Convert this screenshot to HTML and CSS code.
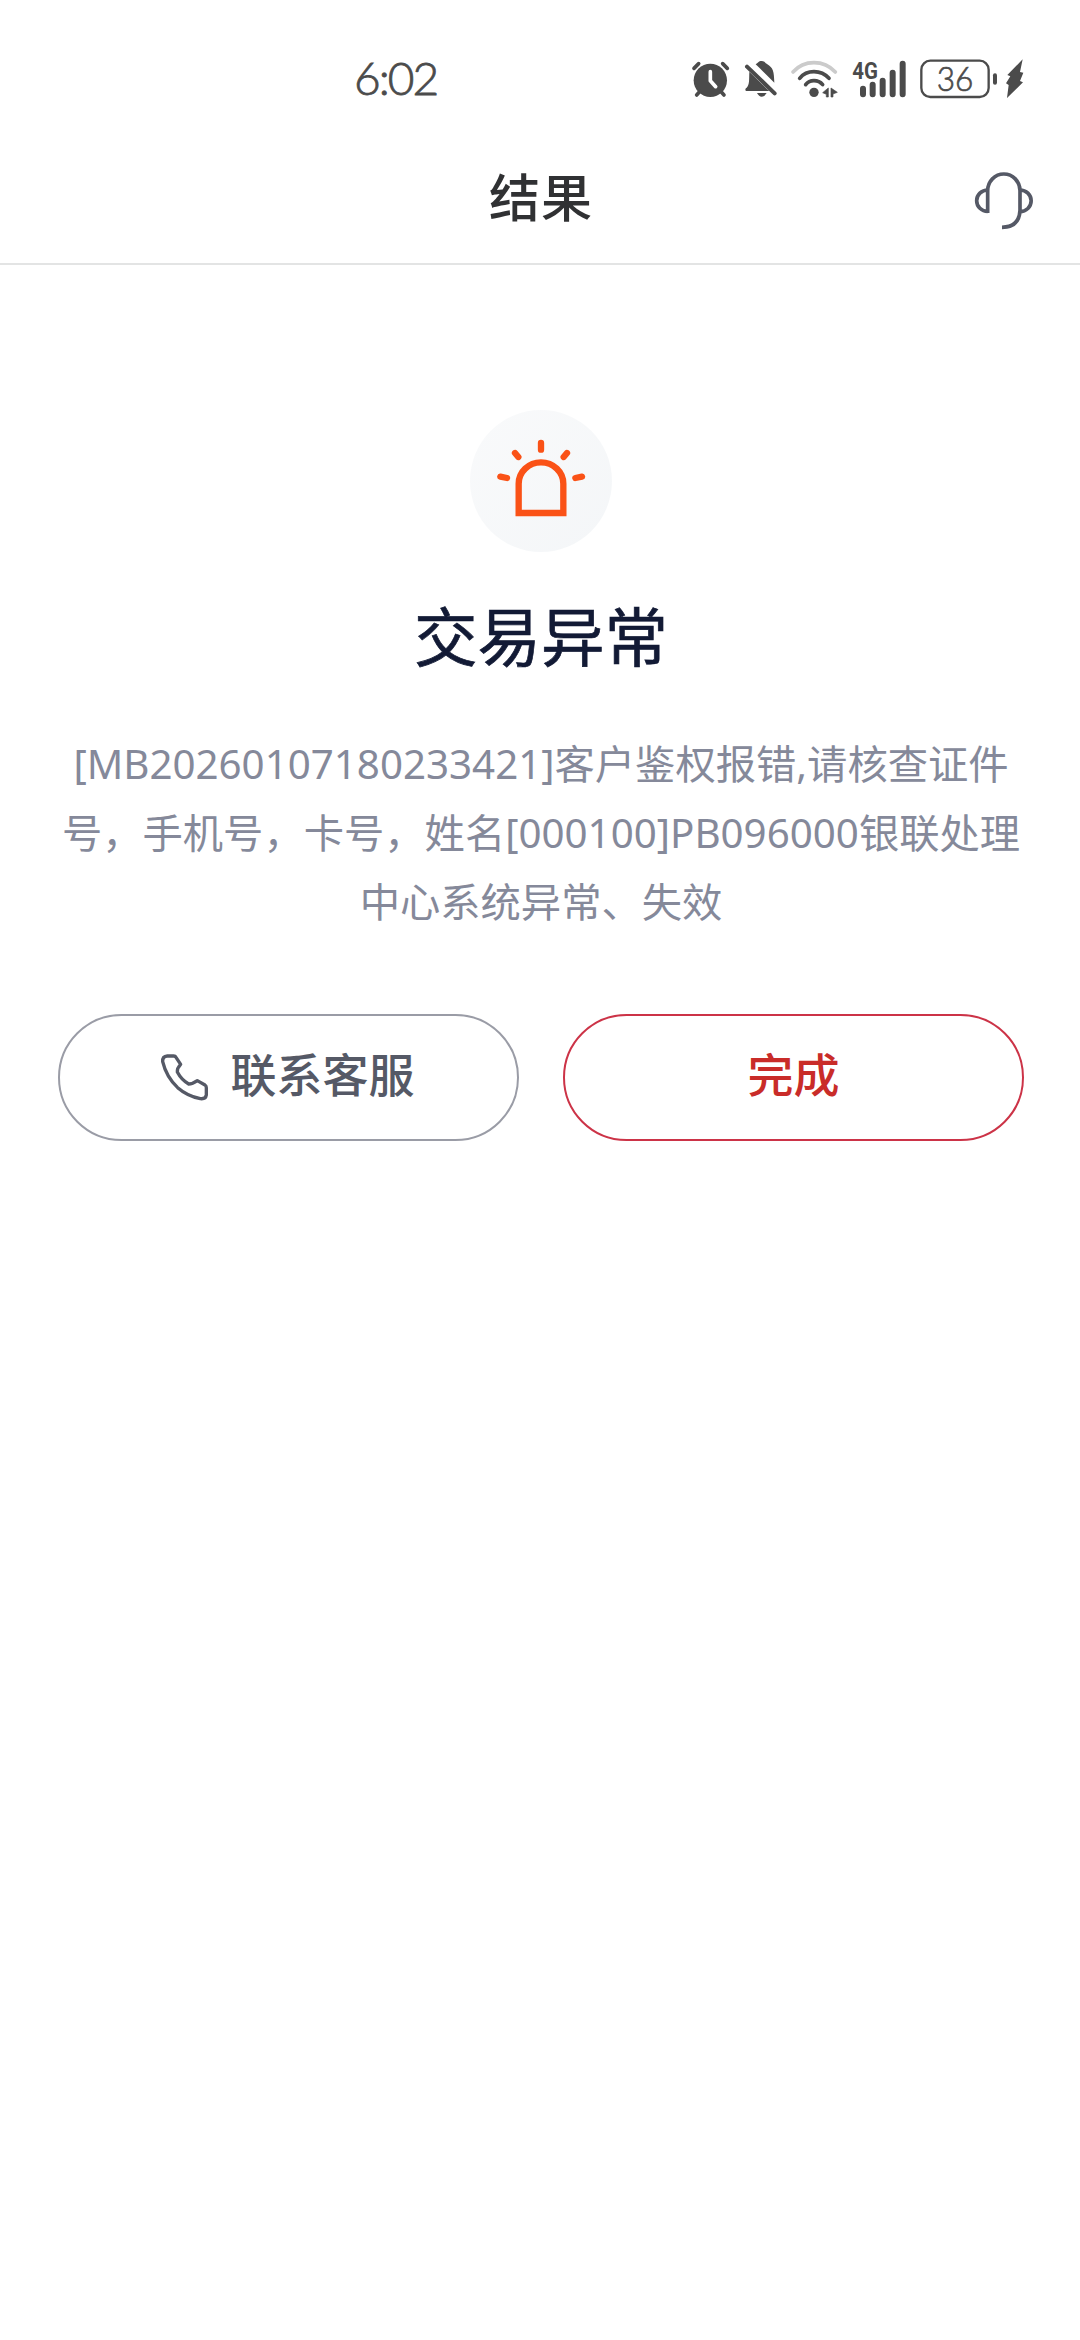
FILE: index.html
```html
<!DOCTYPE html>
<html lang="zh-CN">
<head>
<meta charset="utf-8">
<title>结果</title>
<link rel="stylesheet" href="styles.css">
</head>
<body>
<div class="status-bar">
  <span class="time">6:02</span>
  <div class="status-icons">
    <svg class="alarm" viewBox="0 0 170 195">
      <circle cx="91" cy="103" r="50" fill="#4b4b4b"/>
      <path d="M42 67 56 53M128 53 142 67M60 136 50 147M122 136 132 147" stroke="#4b4b4b" stroke-width="11" stroke-linecap="round"/>
      <path d="M91 77V104L107 122" fill="none" stroke="#fff" stroke-width="11" stroke-linecap="round" stroke-linejoin="round"/>
    </svg>
    <svg class="bell" viewBox="170 0 140 195">
      <path d="M207 77 260 129 267 135H198C193 135 195 126 199 125 208 114 206 105 207 77ZM226 55C233 51 234 45 244 45 254 45 254 51 260 54 279 66 281 75 282 110Q251 79 226 55ZM230 141H259Q253 152 244 152 236 152 230 141Z" fill="#4b4b4b"/>
      <path d="M200 62 283 142" stroke="#4b4b4b" stroke-width="12" stroke-linecap="round"/>
    </svg>
    <svg class="wifi" viewBox="310 0 170 195">
      <g fill="none" stroke-width="11" stroke-linecap="round">
        <path d="M340 78Q365 50 403 50T467 78" stroke="#cbcbcb"/>
        <path d="M360 97Q376 77 403 77T448 97M378 116Q387 104 403 104T429 116" stroke="#4b4b4b"/>
      </g>
      <circle cx="403" cy="139" r="14" fill="#4b4b4b"/>
      <path d="M446 126V153H440V145L429 140ZM454 126V153H460V144L473 139Z" fill="#4b4b4b" stroke="#4b4b4b" stroke-width="2"/>
    </svg>
    <svg class="signal" viewBox="0 0 220 195">
      <text class="network" x="37" y="98" textLength="77" lengthAdjust="spacingAndGlyphs">4G</text>
      <path d="M69 128V145M98 116V145M128 104V145M158 80V145M188 53V145" stroke="#4b4b4b" stroke-width="18" stroke-linecap="round"/>
    </svg>
    <svg class="battery" viewBox="220 0 260 195">
      <rect x="245" y="44" width="202" height="109" rx="27" fill="none" stroke="#4b4b4b" stroke-width="7"/>
      <text class="charge" x="291" y="134" textLength="110" lengthAdjust="spacingAndGlyphs">36</text>
      <path d="M466 88V110" stroke="#4b4b4b" stroke-width="12" stroke-linecap="round"/>
    </svg>
    <svg class="bolt" viewBox="480 0 120 195">
      <path d="M548 40 502 87 511 91 498 112 506 117 501 156 549 109 540 105 550 80 540 78Z" fill="#4b4b4b"/>
    </svg>
  </div>
</div>
<header class="header">
  <h1 class="header-title">结果</h1>
  <svg class="headset" viewBox="0 -37 390 360">
    <g fill="none" stroke="#555966" stroke-width="11">
      <path d="M113 188V121A48.500 50 0 0 1 210 121V180Q208 230 156 231"/>
      <path d="M113 119A33 32 0 0 0 113 183M210 119A33 32 0 0 1 210 184"/>
    </g>
  </svg>
</header>
<main class="result">
  <div class="badge">
    <svg class="siren" viewBox="30 30 426 426">
      <g fill="none" stroke="#fa5217" stroke-width="19">
        <path d="M176 339V251A67 64 0 0 1 310 251V339Z"/>
        <path d="M243 129V149M165 159 175 171M321 159 311 171M121 230 141 234M366 230 346 234" stroke-linecap="round"/>
      </g>
    </svg>
  </div>
  <h2 class="result-title">交易异常</h2>
  <p class="message">
    <span class="line"><span class="code">[MB20260107180233421]</span>客户鉴权报错<span class="code">,</span>请核查证件</span>
    <span class="line">号，手机号，卡号，姓名<span class="code">[000100]PB096000</span>银联处理</span>
    <span class="line">中心系统异常、失效</span>
  </p>
  <div class="actions">
    <button class="button contact">
      <svg class="phone" viewBox="360 160 150 146">
        <path d="M382 169H401Q406 169 408 173L422 194Q411 205 412 217 424 240 446 253 458 253 472 243L495 256Q499 259 499 264V286Q497 299 481 297 442 289 413 264 379 232 368 186 367 170 382 169Z" fill="none" stroke="#555966" stroke-width="10" stroke-linejoin="round"/>
      </svg>
      <span>联系客服</span>
    </button>
    <button class="button done">完成</button>
  </div>
</main>
</body>
</html>
```
FILE: styles.css
```css
* { box-sizing: border-box; }
body {
  margin: 0;
  min-height: 2340px;
  background: #fff;
  font-family: "Noto Sans CJK SC", sans-serif;
}
svg { display: block; }
.status-bar {
  display: flex;
  align-items: center;
  justify-content: space-between;
  height: 132px;
  padding: 24px 40px 0 354px;
}
.time {
  color: #4b4b4b;
  font: 300 46px/64px Lato, sans-serif;
  letter-spacing: -2px;
  -webkit-text-stroke: 0.8px #4b4b4b;
}
.status-icons { display: flex; height: 65px; }
.status-icons svg { height: 65px; }
.alarm { width: 56.670px; }
.bell { width: 46.670px; }
.wifi { width: 56.660px; }
.signal { width: 73.330px; }
.battery { width: 86.670px; }
.bolt { width: 40px; }
.network { font: 700 70px Roboto, sans-serif; fill: #4b4b4b; }
.charge {
  font: 300 100px Lato, sans-serif;
  fill: #4b4b4b;
  stroke: #4b4b4b;
  stroke-width: 2px;
}
.header {
  display: grid;
  grid-template-columns: 130px 1fr 130px;
  align-items: center;
  height: 133px;
  border-bottom: 2px solid #e3e4e4;
}
.header-title {
  grid-column: 2;
  margin: 0;
  padding: 0 0 6px 2px;
  color: #303133;
  font-size: 51px;
  font-weight: 500;
  letter-spacing: 1px;
  line-height: 70px;
  text-align: center;
}
.headset { width: 130px; height: 120px; }
.result {
  display: flex;
  flex-direction: column;
  align-items: center;
  padding: 145px 56px 0 58px;
}
.badge {
  width: 142px;
  height: 142px;
  border-radius: 50%;
  background: linear-gradient(135deg, #f9fafb, #f4f6f8);
}
.siren { width: 142px; height: 142px; }
.result-title {
  margin: 35px 0 0;
  color: #121a35;
  font-size: 63.500px;
  font-weight: 400;
  line-height: 92px;
  -webkit-text-stroke: 0.7px #121a35;
}
.message {
  margin: 48px 0 0;
  color: #85899a;
  font-size: 40.300px;
  line-height: 69px;
  text-align: center;
}
.line { display: block; height: 69px; white-space: nowrap; }
.code { font-family: "Noto Sans", sans-serif; }
.actions {
  display: grid;
  grid-template-columns: 1fr 1fr;
  gap: 44px;
  width: 100%;
  margin-top: 80px;
}
.button {
  display: flex;
  align-items: center;
  justify-content: center;
  height: 127px;
  padding: 0 0 12px;
  border: 2px solid #9a9ca6;
  border-radius: 64px;
  background: #fff;
  color: #555966;
  font: 500 46px/66px "Noto Sans CJK SC", sans-serif;
}
.contact { gap: 21px; padding-right: 3px; }
.phone { width: 50px; height: 48.670px; margin-top: 12px; }
.done { border-color: #cc3347; color: #c92c29; }
```
